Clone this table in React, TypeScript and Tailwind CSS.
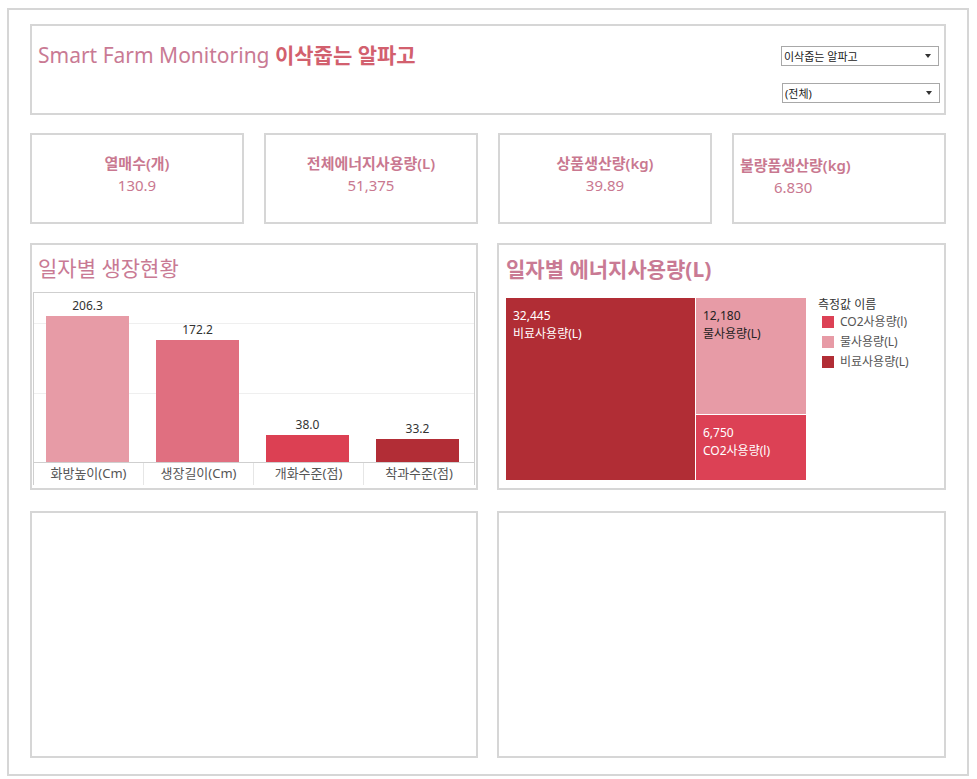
import type { ReactNode } from "react";

const FONT = '"Noto Sans", "Noto Sans CJK KR", sans-serif';

const kpis = [
  { label: "열매수(개)", value: "130.9", align: "center" },
  { label: "전체에너지사용량(L)", value: "51,375", align: "center" },
  { label: "상품생산량(kg)", value: "39.89", align: "center" },
  { label: "불량품생산량(kg)", value: "6.830", align: "left" },
];

const bars = [
  { name: "화방높이(Cm)", value: 206.3, color: "bg-[#e79ba6]" },
  { name: "생장길이(Cm)", value: 172.2, color: "bg-[#e06f80]" },
  { name: "개화수준(점)", value: 38.0, color: "bg-[#dc4053]" },
  { name: "착과수준(점)", value: 33.2, color: "bg-[#b22d36]" },
];

const legend = [
  { name: "CO2사용량(l)", color: "bg-[#dc4155]" },
  { name: "물사용량(L)", color: "bg-[#e79ba6]" },
  { name: "비료사용량(L)", color: "bg-[#b12d35]" },
];

function Panel({ className, children }: { className?: string; children?: ReactNode }) {
  return (
    <div className={`border-2 border-[#d6d6d6] bg-white ${className ?? ""}`}>{children}</div>
  );
}

function Dropdown({ label }: { label: string }) {
  return (
    <div className="flex h-[20px] w-[158px] items-center justify-between border border-[#a8a8a8] bg-white pl-[2px] pr-[7px] text-[11px] leading-none text-[#222]">
      <span>{label}</span>
      <span className="h-0 w-0 border-x-[3px] border-t-[4px] border-x-transparent border-t-[#333]" />
    </div>
  );
}

function BarChart() {
  // 0.7077 px per unit, plot height 171px
  const scale = 0.7077;
  return (
    <div className="mx-[1px] flex h-[193px] flex-col border-x border-t border-[#cfcfcf]">
      <div className="relative h-[170px] border-b border-[#cfcfcf]">
        <div className="absolute left-0 right-0 top-[30px] h-px bg-[#efefef]" />
        <div className="absolute left-0 right-0 top-[100px] h-px bg-[#efefef]" />
        <div className="relative flex h-full items-end gap-[27px] pl-[12px]">
          {bars.map((b) => (
            <div key={b.name} className="flex w-[83px] flex-col items-center">
              <span className="mb-[4px] text-[12px] leading-none text-[#333]">{b.value.toFixed(1)}</span>
              <div className={b.color + " w-full"} style={{ height: Math.round(b.value * scale) }} />
            </div>
          ))}
        </div>
      </div>
      <div className="flex h-[22px] text-[13px] text-[#555]">
        {bars.map((b, i) => (
          <div
            key={b.name}
            className={`flex w-[110px] items-center justify-center ${i < 3 ? "border-r border-[#e6e6e6]" : ""}`}
          >
            {b.name}
          </div>
        ))}
      </div>
    </div>
  );
}

function Treemap() {
  return (
    <div className="flex gap-[12px]">
      <div className="flex h-[182px] w-[300px] gap-px">
        <div className="w-[189px] bg-[#b12d35] px-[7px] pt-[9px] text-[12px] leading-[18px] text-white">
          <div>32,445</div>
          <div>비료사용량(L)</div>
        </div>
        <div className="flex flex-1 flex-col gap-px">
          <div className="h-[116px] bg-[#e79ba6] px-[7px] pt-[9px] text-[12px] leading-[18px] text-[#222]">
            <div>12,180</div>
            <div>물사용량(L)</div>
          </div>
          <div className="flex-1 bg-[#dc4155] px-[7px] pt-[9px] text-[12px] leading-[18px] text-white">
            <div>6,750</div>
            <div>CO2사용량(l)</div>
          </div>
        </div>
      </div>
      <div className="text-[12px] text-[#333]">
        <div className="mb-[3px] leading-[14px]">측정값 이름</div>
        <div className="flex flex-col gap-[6px] pl-[4px]">
          {legend.map((l) => (
            <div key={l.name} className="flex items-center gap-[6px] leading-[14px] text-[#555]">
              <span className={`h-[12px] w-[12px] ${l.color}`} />
              <span>{l.name}</span>
            </div>
          ))}
        </div>
      </div>
    </div>
  );
}

export default function App() {
  return (
    <div className="h-[779px] w-[977px] bg-white pl-[7px] pt-[8px]" style={{ fontFamily: FONT }}>
      <div className="flex h-[768px] w-[962px] flex-col border-2 border-[#d6d6d6] pl-[21px] pt-[14px]">
        <Panel className="flex h-[91px] w-[916px] justify-between pl-[6px] pr-[4px]">
          <h1 className="pt-[15px] text-[21px] leading-[28px] text-[#c97a94]">
            Smart Farm Monitoring <span className="font-bold text-[#d2606e]">이삭줍는 알파고</span>
          </h1>
          <div className="flex flex-col gap-[17px] pt-[20px]">
            <Dropdown label="이삭줍는 알파고" />
            <div className="pl-[1px]">
              <Dropdown label="(전체)" />
            </div>
          </div>
        </Panel>

        <div className="mt-[18px] flex h-[91px] gap-[20px]">
          {kpis.map((k) => (
            <Panel
              key={k.label}
              className={`flex h-full w-[214px] flex-col text-[15px] leading-[22px] text-[#c97890] ${
                k.align === "center" ? "items-center pt-[17px]" : "items-start pl-[6px] pt-[19px]"
              }`}
            >
              <span className="font-semibold">{k.label}</span>
              <span className={k.align === "center" ? "" : "pl-[34px]"}>{k.value}</span>
            </Panel>
          ))}
        </div>

        <div className="mt-[19px] flex h-[247px] gap-[19px]">
          <Panel className="w-[448px]">
            <h2 className="pl-[6px] pt-[9px] text-[21px] leading-[28px] text-[#c97a94]">일자별 생장현황</h2>
            <div className="pt-[10px]">
              <BarChart />
            </div>
          </Panel>
          <Panel className="w-[449px] pl-[7px]">
            <h2 className="pt-[10px] text-[21px] font-bold leading-[28px] text-[#c97a94]">일자별 에너지사용량(L)</h2>
            <div className="pt-[15px]">
              <Treemap />
            </div>
          </Panel>
        </div>

        <div className="mt-[21px] flex h-[247px] gap-[19px]">
          <Panel className="w-[448px]" />
          <Panel className="w-[449px]" />
        </div>
      </div>
    </div>
  );
}
